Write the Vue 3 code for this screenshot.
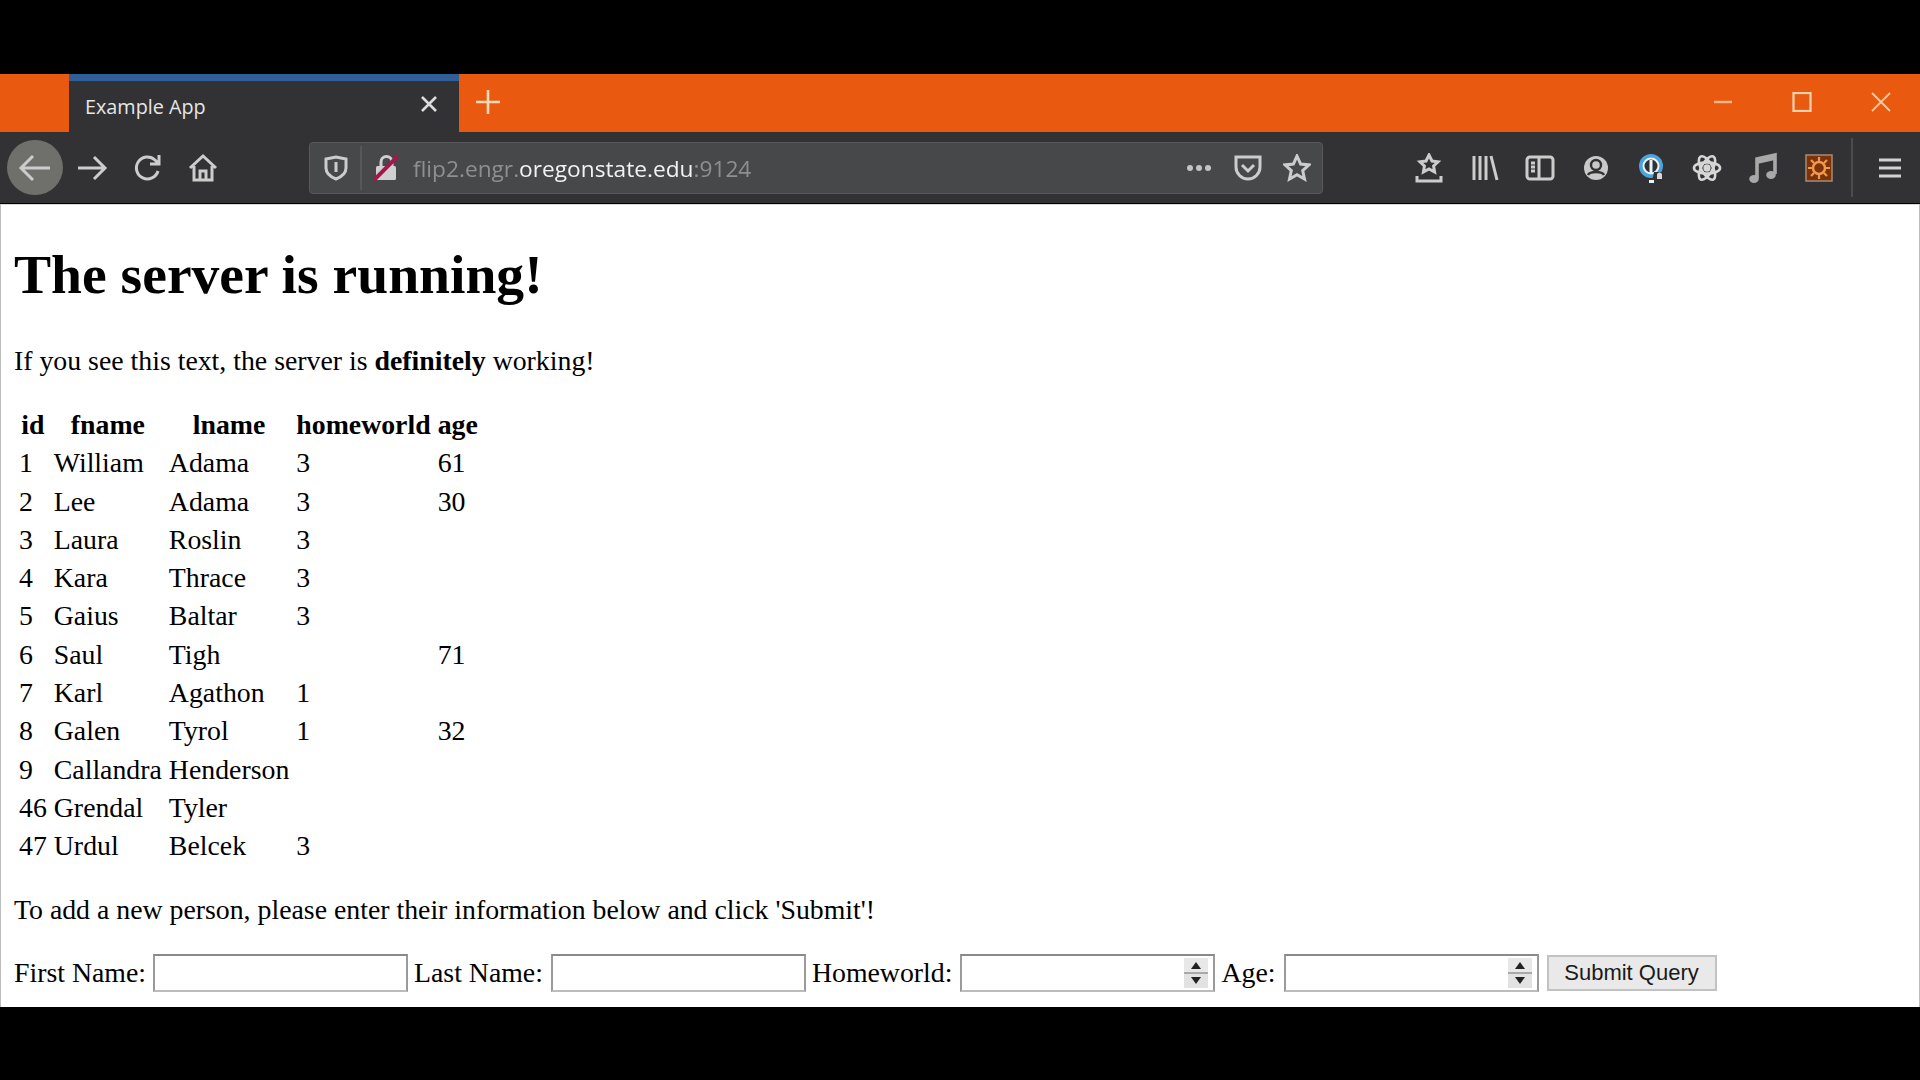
<template>
  <div class="screen">
    <div class="window">
      <div class="tabbar">
        <div class="tab">
          <span class="tab_title">Example App</span>
          <svg class="tab_close" width="20" height="20" viewBox="0 0 20 20"><path d="M3 3l14 14M17 3L3 17" stroke="#dcdcdc" stroke-width="2.6" fill="none" /></svg>
        </div>
        <svg class="new_tab" width="26" height="26" viewBox="0 0 26 26"><path d="M13 1v24M1 13h24" stroke="#f5d9b8" stroke-width="2.6" /></svg>
        <div class="win_controls">
          <svg width="20" height="20" viewBox="0 0 20 20"><path d="M1 10h18" stroke="#f6b98c" stroke-width="2.4" /></svg>
          <svg width="20" height="20" viewBox="0 0 20 20"><rect x="1.5" y="1" width="17" height="18" fill="none" stroke="#f8d3ae" stroke-width="2.2" /></svg>
          <svg width="20" height="20" viewBox="0 0 20 20"><path d="M1 1l18 18M19 1L1 19" stroke="#f8c8a0" stroke-width="1.8" /></svg>
        </div>
      </div>

      <div class="toolbar">
        <div class="nav_btn back">
          <svg width="36" height="30" viewBox="0 0 36 30"><path d="M33 15H4M16 3L4 15l12 12" class="ic" /></svg>
        </div>
        <div class="nav_btn">
          <svg width="36" height="30" viewBox="0 0 36 30"><path d="M4 15h27M20 4l11 11-11 11" class="ic" /></svg>
        </div>
        <div class="nav_btn">
          <svg width="30" height="30" viewBox="0 0 30 30"><path d="M25 18a11 11 0 1 1-3-11l4 4M26 2v9h-9" class="ic" /></svg>
        </div>
        <div class="nav_btn">
          <svg width="30" height="30" viewBox="0 0 30 30"><path d="M2 15L15 3l13 12M6 13v14h18V13M12 27v-9h6v9" class="ic" /></svg>
        </div>

        <div class="urlbar">
          <svg class="shield" width="24" height="26" viewBox="0 0 24 26"><path d="M2 4l10-2 10 2v9c0 6-5 9-10 11C7 22 2 19 2 13z" class="ic" /><path d="M12 7v10" class="ic" /></svg>
          <span class="url_sep"></span>
          <svg class="lock" width="26" height="28" viewBox="0 0 26 28">
            <path d="M8 12V8a5.500 5.500 0 0 1 11 0v4" fill="none" stroke="#d0d0d0" stroke-width="3" />
            <rect x="3" y="12" width="20" height="14" rx="1.500" fill="#d0d0d0" />
            <path d="M1 26L25 2" stroke="#a5174c" stroke-width="4" />
          </svg>
          <span class="url_text">flip2.engr.<b>oregonstate.edu</b>:9124</span>
          <svg class="dots" width="26" height="8" viewBox="0 0 26 8"><circle cx="4" cy="4" r="3" /><circle cx="13" cy="4" r="3" /><circle cx="22" cy="4" r="3" /></svg>
          <svg class="pocket" width="28" height="26" viewBox="0 0 28 26"><path d="M2 2h24v10a12 12 0 0 1-24 0z" class="ic" /><path d="M8 10l6 6 6-6" class="ic" /></svg>
          <svg class="star" width="28" height="28" viewBox="0 0 28 28"><path d="M14 2l3.600 8 8.400.9-6.300 5.700 1.800 8.400L14 20.700 6.500 25l1.800-8.400L2 10.900l8.400-.9z" class="ic" /></svg>
        </div>

        <div class="tools">
          <div class="tool">
            <svg width="28" height="30" viewBox="0 0 28 30"><path d="M14 2l3 6 6 .8-4.400 4.200 1 6L14 16l-5.600 3 1-6L5 8.800 11 8z" class="ic" /><path d="M2 23v5h24v-5" class="ic" /></svg>
          </div>
          <div class="tool">
            <svg width="28" height="28" viewBox="0 0 28 28"><path d="M3 2v24M9 2v24M15 2v24M20 2l6 24" class="ic" /></svg>
          </div>
          <div class="tool">
            <svg width="30" height="26" viewBox="0 0 30 26"><rect x="2" y="2" width="26" height="22" rx="3" class="ic" /><path d="M14 2v22M6 8h4M6 12h4M6 16h4" class="ic" /></svg>
          </div>
          <div class="tool">
            <svg width="28" height="28" viewBox="0 0 28 28"><circle cx="14" cy="14" r="12" fill="#c9c9c9" /><circle cx="14" cy="11" r="5" fill="none" stroke="#323234" stroke-width="2.400" /><path d="M6 21c2-4 14-4 16 0" fill="none" stroke="#323234" stroke-width="2.400" /></svg>
          </div>
          <div class="tool">
            <svg width="30" height="32" viewBox="0 0 28 32">
              <circle cx="13" cy="14" r="12" fill="#4ba3dc" />
              <circle cx="13" cy="14" r="7.500" fill="#323234" stroke="#e8f2f8" stroke-width="2" />
              <rect x="11.500" y="8" width="3" height="13" fill="#e8f2f8" />
              <path d="M14 30l2-10h12v10z" fill="#323234" />
              <path d="M19 27v-4a2.500 2.500 0 0 1 5 0v4z" fill="#d8d8d8" />
              <path d="M11 28h5v3h-5z" fill="#e8f2f8" />
            </svg>
          </div>
          <div class="tool">
            <svg width="30" height="28" viewBox="0 0 32 30" fill="none" stroke="#d6d6d6" stroke-width="2.800">
              <ellipse cx="16" cy="15" rx="14" ry="6" />
              <ellipse cx="16" cy="15" rx="14" ry="6" transform="rotate(60 16 15)" />
              <ellipse cx="16" cy="15" rx="14" ry="6" transform="rotate(120 16 15)" />
              <circle cx="16" cy="15" r="2.500" fill="#d6d6d6" />
            </svg>
          </div>
          <div class="tool">
            <svg width="28" height="32" viewBox="0 0 28 32"><path d="M8 26V7l18-4v19" fill="none" stroke="#a8a8a8" stroke-width="3.600" /><path d="M8 8l18-4v4L8 12z" fill="#a8a8a8" /><ellipse cx="5" cy="27" rx="4.800" ry="4" fill="#a8a8a8" /><ellipse cx="22" cy="23" rx="4.800" ry="4" fill="#a8a8a8" /></svg>
          </div>
          <div class="tool">
            <svg width="28" height="28" viewBox="0 0 28 28">
              <rect x="1" y="1" width="26" height="26" fill="#7d3208" stroke="#a78a78" stroke-width="1.500" />
              <circle cx="14" cy="14" r="6" fill="none" stroke="#ef9a4e" stroke-width="2.500" />
              <path d="M14 3v4M14 21v4M3 14h4M21 14h4M6 6l3 3M19 19l3 3M22 6l-3 3M9 19l-3 3" stroke="#ef9a4e" stroke-width="2.200" />
            </svg>
          </div>
        </div>
        <span class="tool_sep"></span>
        <svg class="hamburger" width="24" height="22" viewBox="0 0 24 22"><path d="M1 3h22M1 11h22M1 19h22" stroke="#d2d2d2" stroke-width="2.800" /></svg>
      </div>

      <div class="page">
        <h1>The server is running!</h1>
        <p class="intro">If you see this text, the server is <b>definitely</b> working!</p>
        <table>
          <thead>
            <tr>
              <th v-for="col in columns" :key="col">{{ col }}</th>
            </tr>
          </thead>
          <tbody>
            <tr v-for="person in people" :key="person.id">
              <td>{{ person.id }}</td>
              <td>{{ person.fname }}</td>
              <td>{{ person.lname }}</td>
              <td>{{ person.homeworld }}</td>
              <td>{{ person.age }}</td>
            </tr>
          </tbody>
        </table>
        <p class="add_text">To add a new person, please enter their information below and click 'Submit'!</p>
        <form class="add_form" @submit.prevent>
          <label>First Name:</label>
          <input type="text" />
          <label>Last Name:</label>
          <input type="text" />
          <label>Homeworld:</label>
          <span class="num_wrap">
            <input type="text" />
            <span class="spin"><i class="up"></i><i class="down"></i></span>
          </span>
          <label>Age:</label>
          <span class="num_wrap">
            <input type="text" />
            <span class="spin"><i class="up"></i><i class="down"></i></span>
          </span>
          <button type="submit">Submit Query</button>
        </form>
      </div>
    </div>
  </div>
</template>

<script setup>
const columns = ['id', 'fname', 'lname', 'homeworld', 'age']

const people = [
  { id: 1, fname: 'William', lname: 'Adama', homeworld: 3, age: 61 },
  { id: 2, fname: 'Lee', lname: 'Adama', homeworld: 3, age: 30 },
  { id: 3, fname: 'Laura', lname: 'Roslin', homeworld: 3, age: '' },
  { id: 4, fname: 'Kara', lname: 'Thrace', homeworld: 3, age: '' },
  { id: 5, fname: 'Gaius', lname: 'Baltar', homeworld: 3, age: '' },
  { id: 6, fname: 'Saul', lname: 'Tigh', homeworld: '', age: 71 },
  { id: 7, fname: 'Karl', lname: 'Agathon', homeworld: 1, age: '' },
  { id: 8, fname: 'Galen', lname: 'Tyrol', homeworld: 1, age: 32 },
  { id: 9, fname: 'Callandra', lname: 'Henderson', homeworld: '', age: '' },
  { id: 46, fname: 'Grendal', lname: 'Tyler', homeworld: '', age: '' },
  { id: 47, fname: 'Urdul', lname: 'Belcek', homeworld: 3, age: '' },
]
</script>

<style>
html,
body {
  margin: 0;
  background: #000;
}
</style>

<style scoped>
.screen {
  height: 1080px;
  padding-top: 74px;
  box-sizing: border-box;
  background: #000;
  overflow: hidden;
}
.window {
  height: 933px;
  display: flex;
  flex-direction: column;
  filter: blur(0.55px);
}
.tabbar {
  height: 58px;
  background: #e95a10;
  display: flex;
  align-items: center;
  padding-left: 69px;
  flex: none;
}
.tab {
  width: 390px;
  height: 58px;
  box-sizing: border-box;
  background: #323234;
  border-top: 7px solid #2f5f96;
  display: flex;
  align-items: center;
  justify-content: space-between;
  padding: 0 20px 0 16px;
  color: #e6e6e6;
  font-family: "Open Sans", sans-serif;
  font-size: 19.800px;
}
.tab_close {
  margin-top: -6px;
}
.new_tab {
  margin-left: 16px;
  margin-top: -3px;
}
.win_controls {
  margin-left: auto;
  margin-right: 29px;
  margin-top: -3px;
  display: flex;
  gap: 59px;
}
.toolbar {
  height: 71px;
  background: #323234;
  display: flex;
  align-items: center;
  padding-left: 7px;
  flex: none;
}
.nav_btn {
  width: 55.500px;
  height: 55px;
  border-radius: 50%;
  display: flex;
  align-items: center;
  justify-content: center;
  flex: none;
}
.back {
  background: #6f6f6c;
  margin-right: 2px;
}
.ic {
  fill: none;
  stroke: #cccccc;
  stroke-width: 3;
}
.urlbar {
  width: 1014px;
  height: 52px;
  margin-left: 78px;
  box-sizing: border-box;
  background: #474849;
  border: 1px solid #59595b;
  border-radius: 4px;
  display: flex;
  align-items: center;
  flex: none;
}
.shield {
  margin-left: 14px;
}
.url_sep {
  width: 2px;
  height: 44px;
  margin-left: 12px;
  background: #575859;
}
.lock {
  margin-left: 11px;
}
.url_text {
  position: relative;
  top: 1px;
  margin-left: 14px;
  color: #8f8f90;
  font-family: "Open Sans", sans-serif;
  font-size: 22.700px;
}
.url_text b {
  font-weight: 400;
  color: #f2f2f2;
}
.dots {
  margin-left: auto;
  fill: #c4c4c4;
}
.pocket {
  margin-left: 22px;
}
.star {
  margin-left: 21px;
  margin-right: 11px;
}
.tools {
  margin-left: 78px;
  display: flex;
  flex: none;
}
.tool {
  width: 55.700px;
  height: 55px;
  display: flex;
  align-items: center;
  justify-content: center;
  flex: none;
}
.tool_sep {
  width: 2px;
  height: 59px;
  margin-left: 4px;
  background: #4c4c4e;
}
.hamburger {
  margin-left: 25px;
}
.page {
  flex: 1;
  margin-top: 1px;
  box-sizing: border-box;
  background: #fff;
  border-top: 1px solid #d8d8d8;
  border-left: 1px solid #bdbdbd;
  border-right: 1px solid #bdbdbd;
  padding: 0 0 0 13px;
  color: #000;
  font-family: "Liberation Serif", "Times New Roman", serif;
  font-size: 27.800px;
  overflow: hidden;
}
h1 {
  margin: 0;
  padding-top: 40px;
  font-size: 55.600px;
  line-height: 58px;
  font-weight: 700;
}
.intro {
  margin: 43px 0 0;
  line-height: 30px;
}
table {
  margin-top: 28px;
  border-spacing: 3px;
  border-collapse: separate;
}
th,
td {
  padding: 2px;
  height: 31.300px;
  line-height: 31.300px;
}
.add_text {
  margin: 28px 0 0;
  line-height: 30px;
}
.add_form {
  margin-top: 29px;
  display: flex;
  align-items: center;
  height: 38px;
}
label {
  margin-right: 8px;
}
label:first-child {
  margin-right: 7px;
}
input {
  width: 255px;
  height: 38px;
  box-sizing: border-box;
  margin-right: 6px;
  border: 2px solid #9a9a9a;
  border-top-color: #8a8a8a;
  border-bottom-color: #bcbcbc;
  background: #fff;
  outline: none;
}
.num_wrap {
  position: relative;
  display: flex;
  margin-right: 6px;
}
.num_wrap input {
  margin-right: 0;
}
.spin {
  position: absolute;
  right: 7px;
  top: 4px;
  width: 24px;
  height: 30px;
  background: linear-gradient(#e8e8e8 0 48%, #a9a9a9 48% 52%, #e2e2e2 52% 100%);
  display: flex;
  flex-direction: column;
  align-items: center;
  justify-content: space-around;
}
.spin i {
  width: 0;
  height: 0;
  border-left: 5px solid transparent;
  border-right: 5px solid transparent;
}
.spin .up {
  border-bottom: 7px solid #222;
}
.spin .down {
  border-top: 7px solid #222;
}
button {
  width: 170px;
  height: 36px;
  margin-left: 2px;
  box-sizing: border-box;
  border: 2px solid #c2c2c2;
  background: #e9e9e9;
  color: #1a1a1a;
  font-family: "Liberation Sans", Arial, sans-serif;
  font-size: 22px;
  padding: 0;
}
</style>
